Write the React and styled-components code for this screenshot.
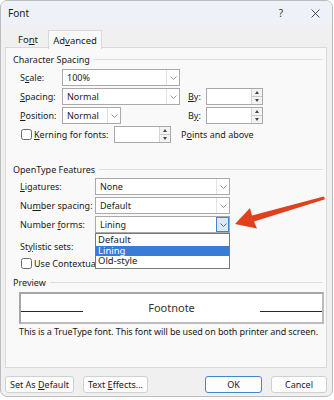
import React from 'react';
import styled, { createGlobalStyle } from 'styled-components';

const Global = createGlobalStyle`
  body {
    margin: 0;
    background: #ffffff;
    font-family: "Noto Sans", "DejaVu Sans", sans-serif;
  }
`;

const Window = styled.div`
  position: relative;
  width: 333px;
  height: 397px;
  box-sizing: border-box;
  border: 1px solid #bdbdbd;
  border-radius: 7px;
  background: #f0f0f0;
  overflow: hidden;
  display: flex;
  flex-direction: column;
  font-size: 9px;
  color: #1b1b1b;
`;

const TitleBar = styled.div`
  height: 24px;
  flex: none;
  display: flex;
  align-items: center;
  padding-left: 7px;
  background: #eef2f8;
  font-size: 10px;
`;

const Title = styled.span`
  flex: 1;
`;

const TitleButton = styled.span`
  width: 34px;
  display: flex;
  justify-content: center;
  align-items: center;
  font-size: 10px;
  color: #333;
`;

const Tabs = styled.div`
  display: flex;
  margin-top: 5px;
  padding-left: 7px;
  height: 18px;
  position: relative;
  z-index: 1;
`;

const Tab = styled.div`
  width: ${p => p.$w}px;
  box-sizing: border-box;
  display: flex;
  align-items: center;
  justify-content: center;
  border: 1px solid ${p => (p.$active ? '#d9d9d9' : 'transparent')};
  border-bottom: none;
  background: ${p => (p.$active ? '#f9f9f9' : 'transparent')};
  height: ${p => (p.$active ? 19 : 18)}px;
  font-size: 9.5px;
`;

const Panel = styled.div`
  margin: -1px 5px 0 4px;
  height: 321px;
  box-sizing: border-box;
  border: 1px solid #d9d9d9;
  background: #f9f9f9;
  display: flex;
  flex-direction: column;
  position: relative;
`;

const Heading = styled.div`
  display: flex;
  align-items: center;
  height: 14px;
  margin-top: ${p => p.$mt}px;
  padding: 0 3px 0 7px;

  &::after {
    content: '';
    flex: 1;
    height: 1px;
    margin-left: 4px;
    background: #dedede;
  }
`;

const Row = styled.div`
  display: flex;
  align-items: center;
  height: ${p => p.$h || 17}px;
  margin-top: ${p => p.$mt}px;
  padding-left: 14px;
`;

const Label = styled.span`
  width: ${p => p.$w}px;
  flex: none;
  white-space: nowrap;
  overflow: hidden;
`;

const Cell = styled.div`
  width: ${p => p.$w}px;
  flex: none;
  display: flex;
`;

const Combo = styled.div`
  position: relative;
  display: flex;
  width: ${p => p.$w}px;
  height: 17px;
  box-sizing: border-box;
  border: 1px solid #a9a9a9;
  background: #fff;
`;

const ComboText = styled.span`
  flex: 1;
  padding-left: 4px;
  line-height: 15px;
`;

const ComboButton = styled.span`
  width: 13px;
  display: flex;
  align-items: center;
  justify-content: center;
  box-sizing: border-box;
  border-left: 1px solid ${p => (p.$active ? '#3d86d6' : '#e3e3e3')};
  background: ${p => (p.$active ? '#dce9f7' : '#fff')};
  ${p => p.$active && 'outline: 1px solid #3d86d6; outline-offset: -1px;'}
`;

const List = styled.div`
  position: absolute;
  left: -1px;
  top: 16px;
  width: 135px;
  box-sizing: border-box;
  border: 1px solid #7a7a7a;
  background: #fff;
  z-index: 3;
  padding: 1px 0;
`;

const ListItem = styled.div`
  height: 10.5px;
  line-height: 10.5px;
  padding-left: 2px;
  font-size: 9.5px;
  background: ${p => (p.$selected ? '#3a7bd5' : 'transparent')};
  color: ${p => (p.$selected ? '#fff' : '#1b1b1b')};
`;

const Spin = styled.div`
  display: flex;
  width: 57px;
  height: 17px;
  box-sizing: border-box;
  border: 1px solid #a9a9a9;
  background: #fff;
`;

const SpinField = styled.span`
  flex: 1;
`;

const SpinButtons = styled.span`
  width: 10px;
  display: flex;
  flex-direction: column;
  border-left: 1px solid #d4d4d4;
  background: #f3f3f3;
`;

const SpinHalf = styled.span`
  flex: 1;
  display: flex;
  align-items: center;
  justify-content: center;
  & + & {
    border-top: 1px solid #c9c9c9;
  }
`;

const Arrowhead = styled.span`
  width: 0;
  height: 0;
  border-left: 2.5px solid transparent;
  border-right: 2.5px solid transparent;
  ${p => (p.$down ? 'border-top: 3px solid #444;' : 'border-bottom: 3px solid #444;')}
`;

const Check = styled.span`
  width: 11px;
  height: 11px;
  box-sizing: border-box;
  border: 1px solid #6a6a6a;
  border-radius: 2.5px;
  background: #fff;
  margin: 0 2px 0 1px;
  flex: none;
`;

const Aside = styled.span`
  margin-left: ${p => p.$ml}px;
`;

const PreviewBox = styled.div`
  margin: 3px 2px 0 13px;
  height: 32px;
  box-sizing: border-box;
  border: 2px solid #a6a6a6;
  border-right-color: #bcbcbc;
  border-bottom-color: #bcbcbc;
  background: #fff;
  display: flex;
  align-items: center;
  justify-content: space-between;
`;

const Rule = styled.span`
  width: 62px;
  height: 1px;
  background: #2a2a2a;
  margin-top: 7px;
`;

const Sample = styled.span`
  font-size: 11px;
  color: #3a3428;
  margin-top: -2px;
`;

const Note = styled.div`
  margin-top: 2px;
  padding-left: 13px;
  line-height: 12px;
  letter-spacing: -0.1px;
  white-space: nowrap;
`;

const Footer = styled.div`
  display: flex;
  margin-top: 8px;
  padding: 0 5px 0 4px;
  gap: 9px;
`;

const Button = styled.button`
  width: ${p => p.$w}px;
  height: 17px;
  margin-left: ${p => (p.$push ? 'auto' : '0')};
  padding: 0;
  box-sizing: border-box;
  border: 1px solid ${p => (p.$primary ? '#3d86d6' : '#d0d0d0')};
  border-radius: 3px;
  background: #fdfdfd;
  font-family: inherit;
  font-size: 9px;
  color: #1b1b1b;
`;

const ArrowSvg = styled.svg`
  position: absolute;
  left: 229px;
  top: 191px;
  pointer-events: none;
  z-index: 4;
`;

const Chevron = ({ color = '#8a8a8a' }) => (
  <svg width="7" height="4" viewBox="0 0 7 4">
    <polyline points="0.5,0.5 3.5,3.5 6.5,0.5" fill="none" stroke={color} strokeWidth="0.9" />
  </svg>
);

const SpinBox = () => (
  <Spin>
    <SpinField />
    <SpinButtons>
      <SpinHalf><Arrowhead /></SpinHalf>
      <SpinHalf><Arrowhead $down /></SpinHalf>
    </SpinButtons>
  </Spin>
);

const Select = ({ w, value, active, children }) => (
  <Combo $w={w}>
    <ComboText>{value}</ComboText>
    <ComboButton $active={active}>
      <Chevron color={active ? '#3a5f8a' : '#8a8a8a'} />
    </ComboButton>
    {children}
  </Combo>
);

export default function App() {
  return (
    <>
      <Global />
      <Window>
        <TitleBar>
          <Title>Font</Title>
          <TitleButton>?</TitleButton>
          <TitleButton>
            <svg width="9" height="9" viewBox="0 0 9 9">
              <path d="M0.5 0.5 L8.5 8.5 M8.5 0.5 L0.5 8.5" stroke="#333" strokeWidth="0.9" />
            </svg>
          </TitleButton>
        </TitleBar>

        <Tabs>
          <Tab $w={40}>Fo<u>n</u>t</Tab>
          <Tab $w={54} $active>Ad<u>v</u>anced</Tab>
        </Tabs>

        <Panel>
          <Heading $mt={4}>Character Spacing</Heading>
          <Row $mt={3}>
            <Label $w={42}>S<u>c</u>ale:</Label>
            <Select w={118} value="100%" />
          </Row>
          <Row $mt={2}>
            <Label $w={42}><u>S</u>pacing:</Label>
            <Cell $w={126}><Select w={118} value="Normal" /></Cell>
            <Label $w={18}><u>B</u>y:</Label>
            <SpinBox />
          </Row>
          <Row $mt={2}>
            <Label $w={42}><u>P</u>osition:</Label>
            <Cell $w={126}><Select w={59} value="Normal" /></Cell>
            <Label $w={18}>B<u>y</u>:</Label>
            <SpinBox />
          </Row>
          <Row $mt={2} $h={16}>
            <Check />
            <Label $w={80}><u>K</u>erning for fonts:</Label>
            <SpinBox />
            <Aside $ml={10}>P<u>o</u>ints and above</Aside>
          </Row>

          <Heading $mt={20}>OpenType Features</Heading>
          <Row $mt={2}>
            <Label $w={75}><u>L</u>igatures:</Label>
            <Select w={135} value="None" />
          </Row>
          <Row $mt={2}>
            <Label $w={75}>Nu<u>m</u>ber spacing:</Label>
            <Select w={135} value="Default" />
          </Row>
          <Row $mt={2}>
            <Label $w={75}>Number <u>f</u>orms:</Label>
            <Select w={135} value="Lining" active>
              <List>
                <ListItem>Default</ListItem>
                <ListItem $selected>Lining</ListItem>
                <ListItem>Old-style</ListItem>
              </List>
            </Select>
          </Row>
          <Row $mt={6} $h={14}>
            <Label $w={75}>St<u>y</u>listic sets:</Label>
          </Row>
          <Row $mt={3} $h={14}>
            <Check />
            <Label $w={62}>Use Contextual <u>A</u>lternates</Label>
          </Row>

          <Heading $mt={5}>Preview</Heading>
          <PreviewBox>
            <Rule />
            <Sample>Footnote</Sample>
            <Rule />
          </PreviewBox>
          <Note>This is a TrueType font. This font will be used on both printer and screen.</Note>
        </Panel>

        <Footer>
          <Button $w={69}>Set As <u>D</u>efault</Button>
          <Button $w={65}>Text <u>E</u>ffects...</Button>
          <Button $w={57} $push $primary>OK</Button>
          <Button $w={56}>Cancel</Button>
        </Footer>

        <ArrowSvg width="98" height="40" viewBox="229 191 98 40">
          <polygon
            points="234,223 249,207 251,214.5 322.7,195.5 324,197.5 323.3,198.5 253,220.5 256,227.5"
            fill="#e0401c"
          />
        </ArrowSvg>
      </Window>
    </>
  );
}
